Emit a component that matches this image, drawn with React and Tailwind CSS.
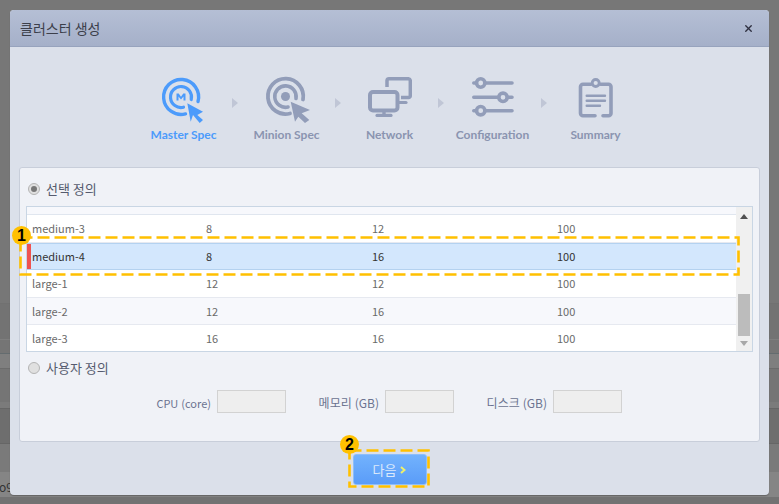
import { X } from 'lucide-react'

const ROWS = [
  { name: 'medium-3', cpu: 8, mem: 12, disk: 100 },
  { name: 'medium-4', cpu: 8, mem: 16, disk: 100, selected: true },
  { name: 'large-1', cpu: 12, mem: 12, disk: 100 },
  { name: 'large-2', cpu: 12, mem: 16, disk: 100, alt: true },
  { name: 'large-3', cpu: 16, mem: 16, disk: 100 },
]

function MasterIcon() {
  return (
    <svg width="44" height="48" viewBox="0 0 44 48" fill="none" className="-translate-x-[1px]">
      <path d="M24.500 38.900A17.500 17.500 0 1 1 37 26.500" stroke="#4c9bfb" strokeWidth="3.400" strokeLinecap="round" />
      <path d="M22.500 32.200A10.500 10.500 0 1 1 30.200 24.500" stroke="#4c9bfb" strokeWidth="3.200" strokeLinecap="round" />
      <path d="M26.300 28.300 42 36.700 36.300 40 42 45 38.700 48 32 40 29.700 46.700Z" fill="#4c9bfb" />
      <path d="M15.500 25.500V18.500H17.700L20 21.800 22.300 18.500H24.500V25.500H22.500V21.500L20 24.600 17.500 21.500V25.500Z" fill="#4c9bfb" />
    </svg>
  )
}

function MinionIcon() {
  return (
    <svg width="46" height="50" viewBox="0 0 46 50" fill="none">
      <path d="M26 40.500A17.700 17.700 0 1 1 39 26.500" stroke="#929db9" strokeWidth="3.800" strokeLinecap="round" />
      <path d="M24 34A10.700 10.700 0 1 1 32 25.500" stroke="#929db9" strokeWidth="3.600" strokeLinecap="round" />
      <circle cx="21.500" cy="23.500" r="4.500" fill="#929db9" />
      <path d="M26.700 28.700 46 37 37.700 40.300 45.300 47 41 50 34.300 43.700 31 48.700Z" fill="#929db9" />
    </svg>
  )
}

function NetworkIcon() {
  return (
    <svg width="44" height="40" viewBox="0 0 44 40" fill="none" className="mb-[6px]">
      <path d="M19 10V3.500A2 2 0 0 1 21 1.800H40.500A2 2 0 0 1 42.300 3.500V18.500A2 2 0 0 1 40.500 20.500H33" stroke="#929db9" strokeWidth="3.500" />
      <path d="M31 25.500H38" stroke="#929db9" strokeWidth="3.200" strokeLinecap="round" />
      <rect x="2" y="15" width="27.500" height="18.500" rx="3" stroke="#929db9" strokeWidth="4" />
      <path d="M16 34V38" stroke="#929db9" strokeWidth="3.400" />
      <path d="M9 38.400H23" stroke="#929db9" strokeWidth="3.200" strokeLinecap="round" />
    </svg>
  )
}

function ConfigIcon() {
  return (
    <svg width="42" height="40" viewBox="0 0 42 40" fill="none" stroke="#929db9" strokeWidth="3.600" strokeLinecap="round" className="mb-[6px]">
      <path d="M1.800 6H4.500M13 6H40" />
      <path d="M1.800 20.300H26.500M35.500 20.300H40" />
      <path d="M1.800 33.700H4.500M13 33.700H40" />
      <circle cx="8.700" cy="6" r="4.200" />
      <circle cx="31" cy="20.300" r="4.200" />
      <circle cx="8.700" cy="33.700" r="4.200" />
    </svg>
  )
}

function SummaryIcon() {
  return (
    <svg width="36" height="40" viewBox="0 0 36 40" fill="none" stroke="#929db9" strokeLinecap="round" className="mb-[5px]">
      <path d="M13 6.300H5A2.500 2.500 0 0 0 2.500 8.800V35.200A2.500 2.500 0 0 0 5 37.700H17M22.500 6.300H30.500A2.500 2.500 0 0 1 33 8.800V35.200A2.500 2.500 0 0 1 30.500 37.700H25" strokeWidth="3.600" />
      <circle cx="17.700" cy="5" r="3.500" strokeWidth="2.800" />
      <path d="M8.700 17.700H27M8.700 22.700H27M8.700 27.700H22" strokeWidth="2.400" />
    </svg>
  )
}

function StepArrow() {
  return (
    <svg width="6" height="10" viewBox="0 0 6 10" className="mt-[33px] shrink-0">
      <path d="M0 0 6 5 0 10Z" fill="#c0c6d6" />
    </svg>
  )
}

function Step({ icon, label, active }) {
  return (
    <div className="w-[97px] flex flex-col items-center">
      <div className="h-[58px] flex items-end justify-center">{icon}</div>
      <div className={`mt-[5px] text-[12px] leading-[14px] font-bold font-['Lato',sans-serif] whitespace-nowrap ${active ? 'text-[#4c9bfb]' : 'text-[#8a94b0]'}`}>
        {label}
      </div>
    </div>
  )
}

function Radio({ checked }) {
  return (
    <span className="w-[12px] h-[12px] rounded-full border border-[#b4b4b4] bg-[#e0e0e0] flex items-center justify-center shrink-0">
      {checked && <span className="w-[6px] h-[6px] rounded-full bg-[#777]" />}
    </span>
  )
}

function SpecInput({ name, unit, wide }) {
  return (
    <div className="flex items-center">
      <span className={`w-[60px] pt-[3px] flex justify-end items-baseline gap-[3px] whitespace-nowrap text-[#6b7390] mr-[6px] ${wide ? 'text-[12px]' : 'text-[11px]'}`}>
        <span>{name}</span>
        <span>{unit}</span>
      </span>
      <span className="block w-[69px] h-[23px] bg-[#eeeeee] border border-[#d2d2d2]" />
    </div>
  )
}

function Annotation({ className, width, height, number, badgeClass }) {
  return (
    <div className={`absolute ${className}`}>
      <svg width={width} height={height} className="block">
        <rect x="1.500" y="1.500" width={width - 3} height={height - 3} fill="none" stroke="#ffc000" strokeWidth="2.600" strokeDasharray="12 5" />
      </svg>
      <span className={`absolute w-[19px] h-[19px] rounded-full bg-[#ffc000] text-black text-[16px] font-bold leading-[19px] text-center font-['Liberation_Sans',sans-serif] ${badgeClass}`}>
        {number}
      </span>
    </div>
  )
}

export default function App() {
  return (
    <div className="relative w-[779px] h-[504px] overflow-hidden bg-[#777777] font-['Noto_Sans_CJK_KR','Liberation_Sans',sans-serif]">
      {/* page behind the dialog */}
      <div className="pt-[303px] flex flex-col">
        <div className="h-[36px] border-t border-[#717171] bg-[#737373]" />
        <div className="h-[14px] border-t border-[#7e7e7e] bg-[#757575]" />
        <div className="h-[15px] border-t border-[#646c6f] bg-[#7f7f7f]" />
        <div className="h-[34px] border-t border-[#6c6c6c] bg-[#757575]" />
        <div className="h-[6px] bg-[#7b7b7b]" />
        <div className="h-[35px] border-t border-[#666] bg-[#6e6e6e]" />
        <div className="h-[29px] border-t border-[#666] bg-[#7a7a7a]" />
        <div className="h-[25px] bg-[#858585] text-[12px] text-[#333] leading-[30px]">
          <span className="-ml-[1px]">o9</span>
        </div>
        <div className="h-[7px] bg-[#727272]" />
      </div>

      {/* dialog */}
      <div className="absolute left-[10px] top-[10px] w-[759px] h-[485px] rounded-[4px] bg-[#dbe0ea] flex flex-col overflow-hidden shadow-[0_1px_1px_rgba(0,0,0,0.25)]">
        <div className="h-[37px] shrink-0 flex items-center justify-between pl-[10px] pr-[15px] bg-gradient-to-b from-[#b5bfd5] to-[#a5b0c9] border-b border-[#97a3bd]">
          <span className="text-[14px] text-[#3c3f4a]">클러스터 생성</span>
          <X size={11} strokeWidth={3} className="text-[#2e3040]" />
        </div>

        <div className="h-[120px] shrink-0 flex justify-center pt-[18px]">
          <Step icon={<MasterIcon />} label="Master Spec" active />
          <StepArrow />
          <Step icon={<MinionIcon />} label="Minion Spec" />
          <StepArrow />
          <Step icon={<NetworkIcon />} label="Network" />
          <StepArrow />
          <Step icon={<ConfigIcon />} label="Configuration" />
          <StepArrow />
          <Step icon={<SummaryIcon />} label="Summary" />
        </div>

        <div className="mx-[9px] h-[275px] shrink-0 rounded-[3px] bg-[#f0f2f7] border border-[#c8ceda] px-[6px]">
          <div className="h-[38px] flex items-center gap-[6px] pl-[2px] pt-[4px]">
            <Radio checked />
            <span className="text-[13px] text-[#555b6e]">선택 정의</span>
          </div>

          <div className="h-[146px] border border-[#c9d6e4] bg-white flex overflow-hidden">
            <div className="flex-1 flex flex-col">
              <div className="h-[8px] shrink-0 bg-[#f7f8fc] border-b border-[#e0e6ef]" />
              {ROWS.map((row) => (
                <div
                  key={row.name}
                  className={`h-[27.5px] shrink-0 flex items-center text-[11px] pl-[5px] border-b ${
                    row.selected
                      ? 'relative bg-[#d3e7fd] border-[#b4d2f0] border-t text-[#333]'
                      : `border-[#e6e9f0] text-[#6a6a6a] ${row.alt ? 'bg-[#f7f8fc]' : 'bg-white'}`
                  }`}
                >
                  {row.selected && <span className="absolute left-0 top-0 bottom-0 w-[4px] bg-[#ef5350]" />}
                  <span className="w-[174px]">{row.name}</span>
                  <span className="w-[166px]">{row.cpu}</span>
                  <span className="w-[185px]">{row.mem}</span>
                  <span>{row.disk}</span>
                </div>
              ))}
            </div>
            <div className="w-[16px] shrink-0 bg-[#f0f0f0] flex flex-col items-center">
              <svg width="8" height="5" viewBox="0 0 8 5" className="mt-[7px] shrink-0">
                <path d="M0 5 4 0 8 5Z" fill="#505050" />
              </svg>
              <div className="w-[12px] h-[42px] mt-[75px] bg-[#bcbcbc]" />
              <svg width="8" height="5" viewBox="0 0 8 5" className="mt-[5px] shrink-0">
                <path d="M0 0 8 0 4 5Z" fill="#a8a8a8" />
              </svg>
            </div>
          </div>

          <div className="h-[31px] flex items-center gap-[6px] pl-[2px]">
            <Radio />
            <span className="text-[13px] text-[#555b6e]">사용자 정의</span>
          </div>

          <div className="mt-[7px] flex pl-[125px] gap-[33px]">
            <SpecInput name="CPU" unit="(core)" />
            <SpecInput name="메모리" unit="(GB)" wide />
            <SpecInput name="디스크" unit="(GB)" wide />
          </div>
        </div>

        <div className="flex-1 flex justify-center items-start pt-[12px]">
          <button className="w-[74px] h-[31px] rounded-[3px] bg-gradient-to-b from-[#72b2fd] to-[#5a9cf8] border border-[#8dbefa] flex items-center justify-center gap-[4px] text-[13px] text-[#dbe9fb]">
            다음
            <svg width="6" height="8" viewBox="0 0 6 8">
              <path d="M1 1 4.500 4 1 7" fill="none" stroke="#eef06a" strokeWidth="2" />
            </svg>
          </button>
        </div>
      </div>

      <Annotation className="left-[19px] top-[236px]" width={721} height={40} number="1" badgeClass="left-[-7px] top-[-10px]" />
      <Annotation className="left-[348px] top-[449px]" width={82} height={39} number="2" badgeClass="left-[-8px] top-[-14px]" />
    </div>
  )
}
